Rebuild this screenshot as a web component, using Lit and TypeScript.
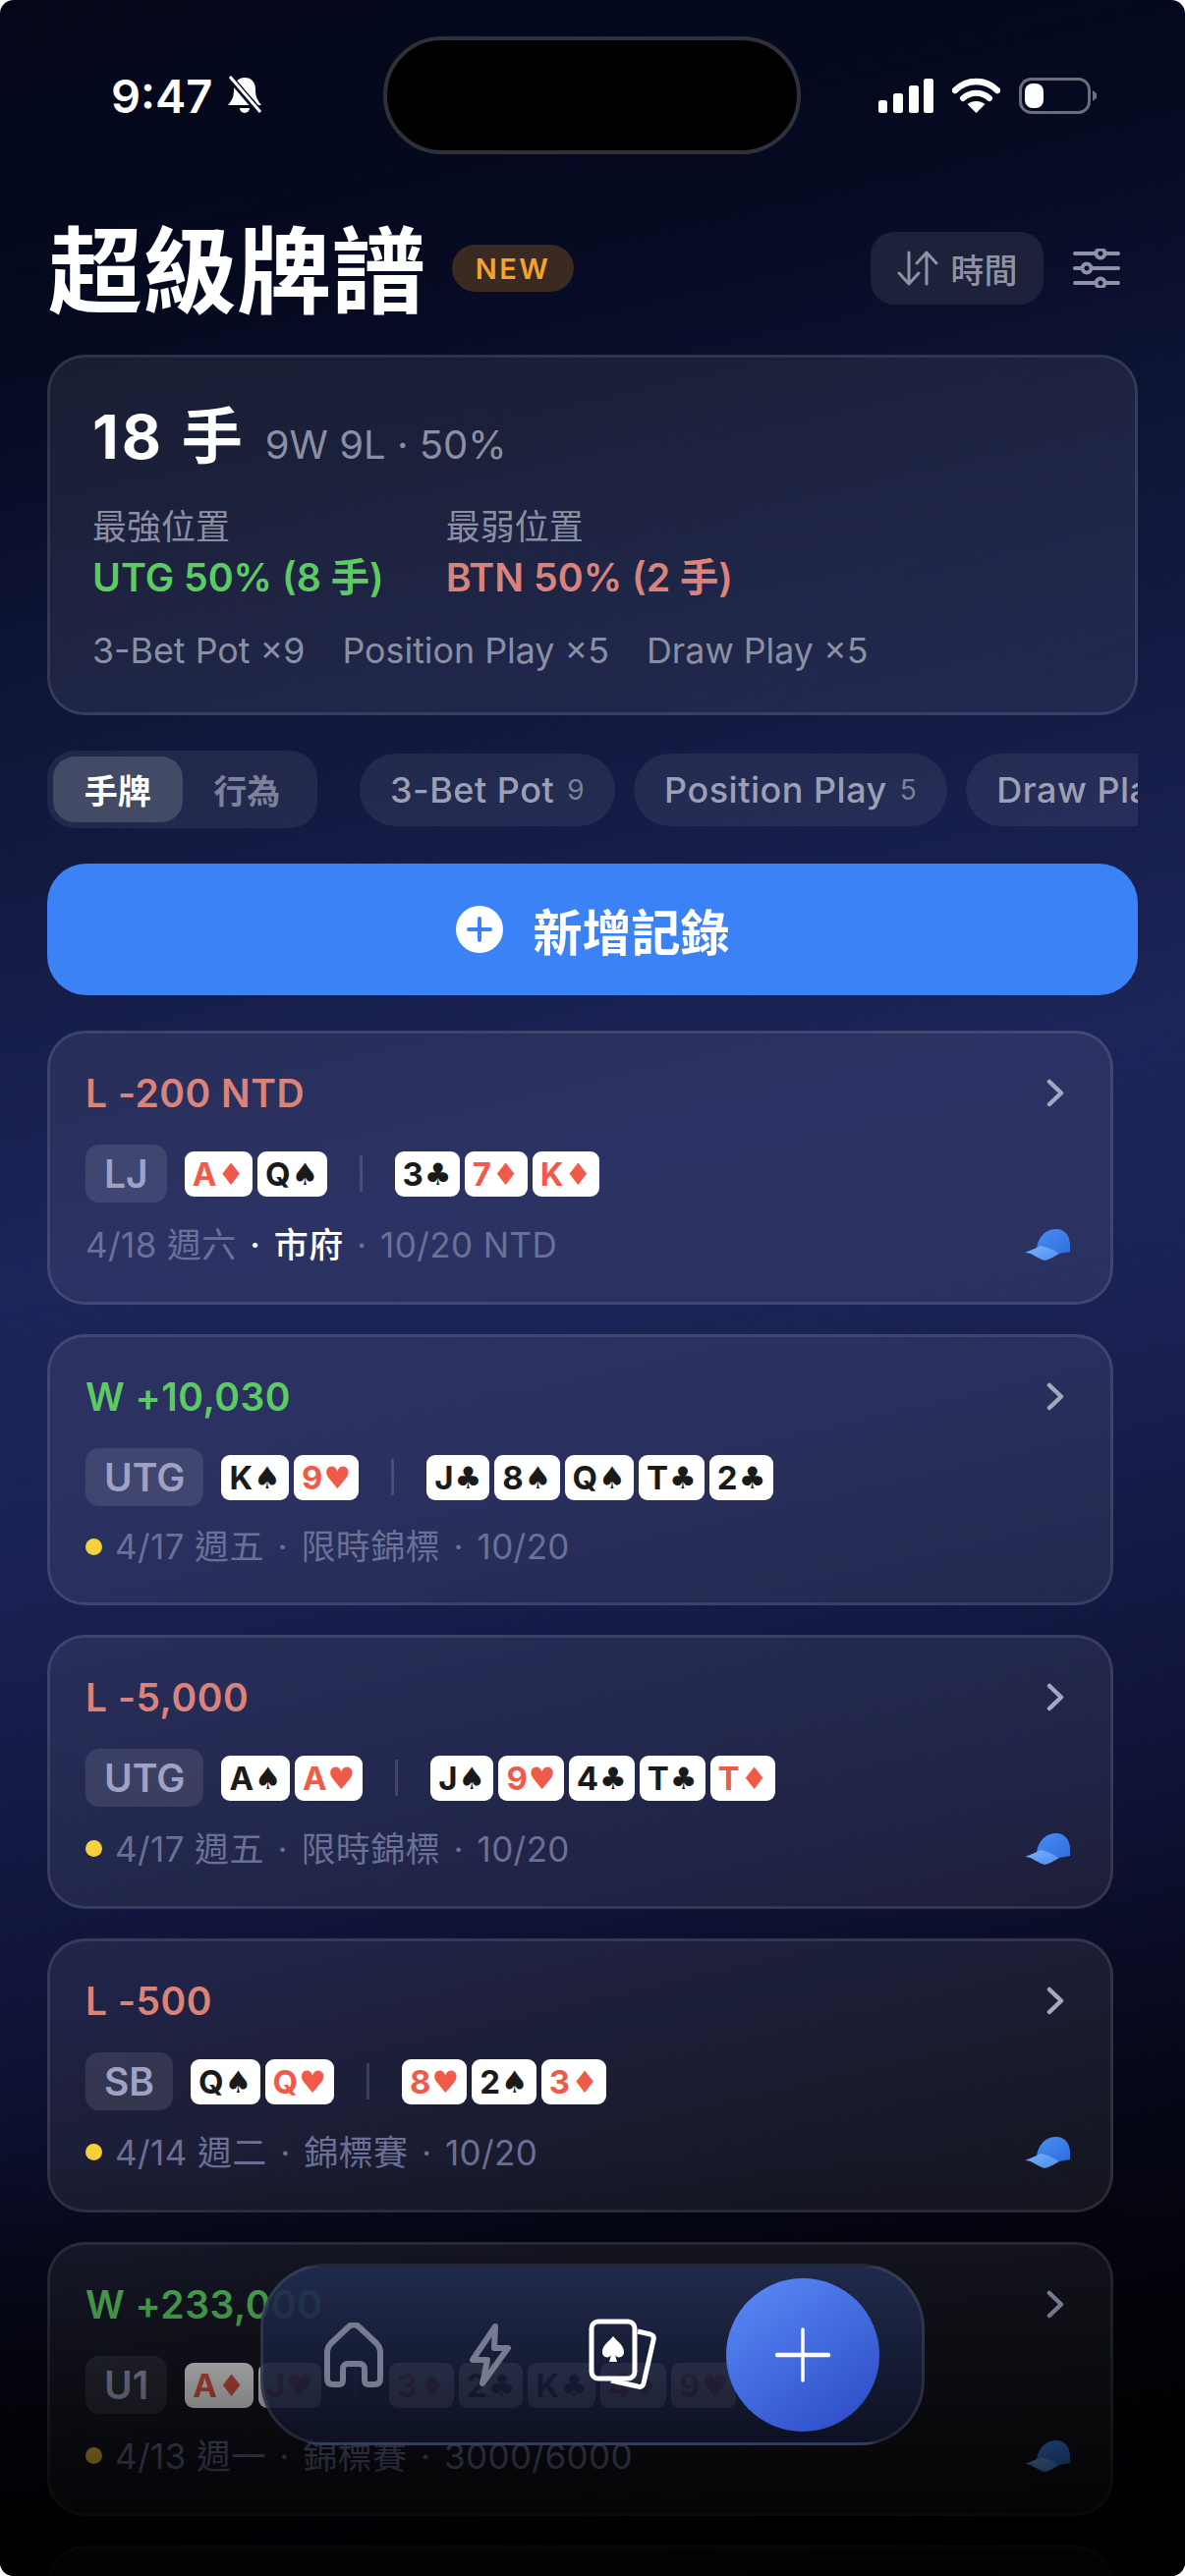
import { LitElement, html, css, svg } from 'lit';
import { customElement } from 'lit/decorators.js';

interface Hand {
  result: string;
  win: boolean;
  pos: string;
  hole: string[];
  board: string[];
  dot: boolean;
  date: string;
  venue: string;
  venueLit?: boolean;
  stakes: string;
  hat: boolean;
}

const HANDS: Hand[] = [
  { result: 'L -200 NTD', win: false, pos: 'LJ', hole: ['A♦', 'Q♠'], board: ['3♣', '7♦', 'K♦'], dot: false, date: '4/18 週六', venue: '市府', venueLit: true, stakes: '10/20 NTD', hat: true },
  { result: 'W +10,030', win: true, pos: 'UTG', hole: ['K♠', '9♥'], board: ['J♣', '8♠', 'Q♠', 'T♣', '2♣'], dot: true, date: '4/17 週五', venue: '限時錦標', stakes: '10/20', hat: false },
  { result: 'L -5,000', win: false, pos: 'UTG', hole: ['A♠', 'A♥'], board: ['J♠', '9♥', '4♣', 'T♣', 'T♦'], dot: true, date: '4/17 週五', venue: '限時錦標', stakes: '10/20', hat: true },
  { result: 'L -500', win: false, pos: 'SB', hole: ['Q♠', 'Q♥'], board: ['8♥', '2♠', '3♦'], dot: true, date: '4/14 週二', venue: '錦標賽', stakes: '10/20', hat: true },
  { result: 'W +233,000', win: true, pos: 'U1', hole: ['A♦', 'J♥'], board: ['3♦', '2♣', 'K♣', '4♦', '9♥'], dot: true, date: '4/13 週一', venue: '錦標賽', stakes: '3000/6000', hat: true },
];

const chevron = svg`<path d="M3 3l12 11.5L3 26" fill="none" stroke="#a3a7c0" stroke-width="4.5" stroke-linecap="round" stroke-linejoin="round"/>`;

@customElement('app-root')
export class AppRoot extends LitElement {
  static styles = css`
    :host {
      display: block;
      width: 1206px;
      height: 2622px;
      background: #fff;
      font-family: Inter, "Noto Sans CJK TC", sans-serif;
      color: #fff;
    }
    .screen {
      position: relative;
      height: 100%;
      overflow: hidden;
      border-radius: 14px;
      background: linear-gradient(167deg, #04071a 0%, #050a20 12%, #11183d 28%, #1c2459 45%, #1a2152 56%, #10143a 70%, #050614 84%, #000 100%);
    }
    .status {
      height: 218px;
      padding: 66px 89px 0 113px;
      box-sizing: border-box;
      display: flex;
      justify-content: space-between;
      align-items: flex-start;
    }
    .clock {
      display: flex;
      align-items: center;
      gap: 13px;
      height: 62px;
      font-size: 47px;
      font-weight: 600;
    }
    .sys {
      display: flex;
      align-items: center;
      gap: 19px;
      height: 62px;
    }
    .island {
      position: absolute;
      left: 390px;
      top: 37px;
      width: 425px;
      height: 120px;
      box-sizing: border-box;
      border: 4px solid #2f303a;
      border-radius: 60px;
      background: #000;
    }
    .page {
      padding: 0 48px;
    }
    .title-row {
      display: flex;
      align-items: center;
      height: 110px;
    }
    h1 {
      margin: 5px 0 0 1px;
      font-size: 96px;
      line-height: 110px;
      font-weight: 700;
    }
    .new {
      margin-left: 27px;
      width: 124px;
      height: 48px;
      border-radius: 24px;
      background: #3a2a22;
      color: #f5a32f;
      font-size: 29px;
      font-weight: 600;
      letter-spacing: 2.5px;
      display: flex;
      align-items: center;
      justify-content: center;
    }
    .sort {
      margin-left: auto;
      width: 176px;
      height: 74px;
      border-radius: 24px;
      background: #1d2139;
      color: #8f92a6;
      font-size: 34px;
      font-weight: 500;
      display: flex;
      align-items: center;
      justify-content: center;
      gap: 13px;
    }
    .filter {
      margin: 0 18px 0 30px;
    }
    .summary {
      margin-top: 33px;
      box-sizing: border-box;
      height: 367px;
      padding: 45px 44px 39px;
      border: 3px solid rgba(255, 255, 255, 0.1);
      border-radius: 38px;
      background: linear-gradient(160deg, rgba(255, 255, 255, 0.08), rgba(255, 255, 255, 0.06));
    }
    .head {
      display: flex;
      align-items: baseline;
      gap: 20px;
      line-height: 72px;
      margin-left: -1px;
    }
    .head b {
      font-size: 62px;
      font-weight: 700;
      letter-spacing: 3px;
    }
    .head span {
      font-size: 40px;
      color: #8b8fa3;
    }
    .extremes {
      display: flex;
      gap: 63px;
      margin-top: 25px;
      margin-left: -1px;
    }
    .label {
      font-size: 35px;
      line-height: 44px;
      color: #8b8fa3;
    }
    .value {
      margin-top: 5px;
      font-size: 39.300px;
      line-height: 50px;
      font-weight: 600;
    }
    .win {
      color: #5ccb62;
    }
    .loss {
      color: #d9837b;
    }
    .tags {
      display: flex;
      gap: 38px;
      margin: 25px 0 0 -1px;
      font-size: 35.800px;
      line-height: 48px;
      color: #8b8fa3;
    }
    .toolbar {
      margin-top: 36px;
      height: 79px;
      display: flex;
      align-items: center;
      overflow: hidden;
    }
    .segment {
      flex: none;
      box-sizing: border-box;
      width: 275px;
      height: 79px;
      padding: 6px;
      margin-right: 43px;
      border-radius: 28px;
      background: rgba(255, 255, 255, 0.07);
      display: flex;
      align-items: center;
      font-size: 34px;
      font-weight: 600;
      color: #7d8199;
    }
    .segment span {
      width: 132px;
      height: 67px;
      display: flex;
      align-items: center;
      justify-content: center;
    }
    .segment .on {
      border-radius: 22px;
      background: #434a66;
      color: #fff;
    }
    .chip {
      flex: none;
      height: 74px;
      padding: 0 31px;
      margin-right: 19px;
      border-radius: 37px;
      background: rgba(255, 255, 255, 0.07);
      color: #9ba0b5;
      font-size: 36px;
      font-weight: 500;
      letter-spacing: 0.5px;
      display: flex;
      align-items: center;
      gap: 13px;
    }
    .chip small {
      font-size: 28px;
      font-weight: 400;
      color: #7d8199;
    }
    .add {
      margin-top: 36px;
      height: 134px;
      border-radius: 40px;
      background: #3b82f6;
      display: flex;
      align-items: center;
      justify-content: center;
      gap: 31px;
      font-size: 50px;
      font-weight: 600;
    }
    .list {
      margin-top: 36px;
      display: flex;
      flex-direction: column;
      gap: 30px;
      width: 1085px;
    }
    .card {
      box-sizing: border-box;
      padding: 35px 41px 34px 36px;
      border: 3px solid rgba(255, 255, 255, 0.1);
      border-radius: 38px;
      background: rgba(255, 255, 255, 0.07);
    }
    .card.stub {
      height: 278px;
    }
    .top {
      display: flex;
      justify-content: space-between;
      align-items: center;
      height: 50px;
      font-size: 39px;
      font-weight: 600;
      letter-spacing: 0.5px;
    }
    .top svg {
      margin-right: 6px;
    }
    .cards {
      margin-top: 28px;
      display: flex;
      align-items: center;
      gap: 5px;
    }
    .pos {
      box-sizing: border-box;
      height: 59px;
      padding: 0 19px;
      margin-right: 13px;
      border-radius: 14px;
      background: rgba(255, 255, 255, 0.1);
      color: #9ea3c6;
      font-size: 39px;
      font-weight: 600;
      display: flex;
      align-items: center;
    }
    .pc {
      box-sizing: border-box;
      height: 46px;
      padding: 0 8px;
      border-radius: 9px;
      background: #fff;
      color: #1a1a1a;
      font-size: 33px;
      font-weight: 700;
      display: flex;
      align-items: center;
      gap: 1px;
    }
    .pc.red {
      color: #ef5a4a;
    }
    .pc i {
      font-family: "DejaVu Sans", sans-serif;
      font-style: normal;
      font-size: 31px;
      font-weight: 400;
    }
    .sep {
      width: 3px;
      height: 37px;
      margin: 0 28px;
      background: rgba(255, 255, 255, 0.14);
    }
    .meta {
      margin-top: 19px;
      min-height: 44px;
      padding-bottom: 1px;
      display: flex;
      align-items: center;
      font-size: 35px;
      line-height: 44px;
      color: #6a7096;
      letter-spacing: 0.4px;
    }
    .meta .dot {
      width: 17px;
      height: 17px;
      margin-right: 13px;
      border-radius: 50%;
      background: #f6d13c;
    }
    .meta .mid {
      margin: 0 13.500px;
    }
    .meta .lit {
      color: #fff;
      font-weight: 500;
    }
    .meta svg {
      margin: 8px 0 7px auto;
    }
    .fade {
      position: absolute;
      left: 0;
      right: 0;
      bottom: 0;
      height: 430px;
      background: linear-gradient(180deg, rgba(0, 0, 0, 0), rgba(0, 0, 0, 0.36) 47%, rgba(0, 0, 0, 0.92) 100%);
      pointer-events: none;
    }
    .nav {
      position: absolute;
      left: 265px;
      top: 2304px;
      width: 676px;
      height: 185px;
      box-sizing: border-box;
      border: 3px solid rgba(255, 255, 255, 0.09);
      border-radius: 66px;
      background: linear-gradient(180deg, rgba(34, 45, 80, 0.9), rgba(14, 18, 38, 0.88));
      display: flex;
      align-items: center;
      padding-left: 62px;
    }
    .nav .bolt {
      margin-left: 87px;
    }
    .nav .deck {
      margin-left: 78px;
    }
    .fab {
      position: absolute;
      left: 739px;
      top: 2319px;
      width: 156px;
      height: 156px;
      border-radius: 50%;
      background: linear-gradient(145deg, #5b8cf8, #2a48c4);
      display: flex;
      align-items: center;
      justify-content: center;
    }
  `;

  private hat() {
    return html`<svg width="46" height="32" viewBox="0 0 46 32">
      <defs>
        <linearGradient id="hc" x1="0" y1="0" x2="1" y2="1">
          <stop offset="0" stop-color="#4a8df0" />
          <stop offset="1" stop-color="#2f6fe0" />
        </linearGradient>
        <linearGradient id="hv" x1="0" y1="0" x2="1" y2="1">
          <stop offset="0" stop-color="#7ab2fa" />
          <stop offset="1" stop-color="#4c8ef0" />
        </linearGradient>
      </defs>
      <path d="M12 19C14 7 22 0 32 0c9 0 14 7 14 16v7l-11 2C28 22 20 20 12 19z" fill="url(#hc)" />
      <path d="M0 24c6-2 12-5 16-7 8 2 15 5 19 8-5 3-10 6-15 7C14 31 8 24 0 24z" fill="url(#hv)" />
    </svg>`;
  }

  private playing(c: string) {
    const red = c.endsWith('♦') || c.endsWith('♥');
    return html`<span class="pc ${red ? 'red' : ''}">${c[0]}<i>${c[1]}</i></span>`;
  }

  private card(h: Hand) {
    const lit = h.venueLit ? 'lit' : '';
    return html`<div class="card">
      <div class="top ${h.win ? 'win' : 'loss'}">
        <span>${h.result}</span>
        <svg width="18" height="29" viewBox="0 0 18 29">${chevron}</svg>
      </div>
      <div class="cards">
        <span class="pos">${h.pos}</span>
        ${h.hole.map((c) => this.playing(c))}
        <span class="sep"></span>
        ${h.board.map((c) => this.playing(c))}
      </div>
      <div class="meta">
        ${h.dot ? html`<span class="dot"></span>` : ''}
        <span>${h.date}</span><span class="mid ${lit}">·</span><span class=${lit}>${h.venue}</span><span class="mid">·</span><span>${h.stakes}</span>
        ${h.hat ? this.hat() : ''}
      </div>
    </div>`;
  }

  render() {
    return html`
      <div class="screen">
        <div class="status">
          <div class="clock">
            9:47
            <svg width="40" height="40" viewBox="0 0 40 40">
              <path d="M20 2c-7 0-11 5-11 12 0 8-2 11-6 16h34c-4-5-6-8-6-16 0-7-4-12-11-12z" fill="#fff" />
              <path d="M15 33a5 5 0 0 0 10 0z" fill="#fff" />
              <path d="M5 2l31 36" stroke="#050a20" stroke-width="7" />
              <path d="M5 1l31 36" stroke="#fff" stroke-width="3" />
            </svg>
          </div>
          <div class="sys">
            <svg width="56" height="35" viewBox="0 0 56 35" fill="#fff">
              <rect x="0" y="22" width="9" height="13" rx="2.5" />
              <rect x="15" y="15" width="10" height="20" rx="2.5" />
              <rect x="31" y="7" width="10" height="28" rx="2.5" />
              <rect x="46" y="0" width="10" height="35" rx="2.5" />
            </svg>
            <svg width="49" height="36" viewBox="0 0 49 36">
              <path d="M3 13C15 1 34 1 46 13" fill="none" stroke="#fff" stroke-width="6.5" stroke-linecap="round" />
              <path d="M11 21c8-7 19-7 27 0" fill="none" stroke="#fff" stroke-width="6" stroke-linecap="round" />
              <path d="M24.500 36l-9-9c5-4 13-4 18 0z" fill="#fff" />
            </svg>
            <svg width="80" height="37" viewBox="0 0 80 37">
              <rect x="1.500" y="1.500" width="70" height="34" rx="11" fill="none" stroke="#6b6d7b" stroke-width="3" />
              <rect x="6" y="6" width="19" height="25" rx="8" fill="#fff" />
              <path d="M75 13l4 3v5l-4 3z" fill="#6b6d7b" />
            </svg>
          </div>
        </div>
        <div class="island"></div>

        <div class="page">
          <div class="title-row">
            <h1>超級牌譜</h1>
            <span class="new">NEW</span>
            <div class="sort">
              <svg width="42" height="36" viewBox="0 0 42 36" fill="none" stroke="#8f92a6" stroke-width="3" stroke-linecap="round" stroke-linejoin="round">
                <path d="M12 2v32M2 23l10 11 10-11" />
                <path d="M30 34V2M20 13L30 2l10 11" />
              </svg>
              <span>時間</span>
            </div>
            <svg class="filter" width="48" height="40" viewBox="0 0 48 40" fill="none" stroke="#8f92a6" stroke-width="4" stroke-linecap="round">
              <path d="M2 5h21M33 5h13M2 20h7M19 20h27M2 35h21M33 35h13" />
              <circle cx="28" cy="5" r="4.500" />
              <circle cx="14" cy="20" r="4.500" />
              <circle cx="28" cy="35" r="4.500" />
            </svg>
          </div>

          <section class="summary">
            <div class="head"><b>18 手</b><span>9W 9L · 50%</span></div>
            <div class="extremes">
              <div>
                <div class="label">最強位置</div>
                <div class="value win">UTG 50% (8 手)</div>
              </div>
              <div>
                <div class="label">最弱位置</div>
                <div class="value loss">BTN 50% (2 手)</div>
              </div>
            </div>
            <div class="tags">
              <span>3-Bet Pot ×9</span>
              <span>Position Play ×5</span>
              <span>Draw Play ×5</span>
            </div>
          </section>

          <div class="toolbar">
            <div class="segment"><span class="on">手牌</span><span>行為</span></div>
            <div class="chip">3-Bet Pot <small>9</small></div>
            <div class="chip">Position Play <small>5</small></div>
            <div class="chip">Draw Play <small>5</small></div>
          </div>

          <div class="add">
            <svg width="48" height="48" viewBox="0 0 48 48">
              <circle cx="24" cy="24" r="24" fill="#fff" />
              <path d="M24 13v22M13 24h22" stroke="#3b82f6" stroke-width="4" stroke-linecap="round" />
            </svg>
            <span>新增記錄</span>
          </div>

          <div class="list">
            ${HANDS.map((h) => this.card(h))}
            <div class="card stub"></div>
          </div>
        </div>

        <div class="fade"></div>

        <nav class="nav">
          <svg width="60" height="66" viewBox="0 0 60 66" fill="none" stroke="#777b8f" stroke-width="6" stroke-linejoin="round">
            <path d="M3 30c0-4 1-6 4-9L24 5c4-4 8-4 12 0l17 16c3 3 4 5 4 9v27c0 4-2 6-6 6h-6c-3 0-4-2-4-5V47c0-3-2-5-5-5H24c-3 0-5 2-5 5v11c0 3-1 5-4 5H9c-4 0-6-2-6-6z" />
          </svg>
          <svg class="bolt" width="44" height="66" viewBox="0 0 44 66" fill="none" stroke="#777b8f" stroke-width="6" stroke-linejoin="round">
            <path d="M27 4L4 38h15l-5 24 26-36H26z" />
          </svg>
          <svg class="deck" width="72" height="74" viewBox="0 0 72 74" fill="none" stroke="#fff" stroke-width="5">
            <rect x="3" y="3" width="44" height="58" rx="7" />
            <path d="M50 13l13 3c3 1 4 3 3 6l-10 44c-1 3-3 4-6 3l-27-6" stroke-linejoin="round" />
            <path d="M25 18c4 5 11 9 11 16 0 6-7 7-9 3l2 7h-8l2-7c-2 4-9 3-9-3 0-7 7-11 11-16z" fill="#fff" stroke="none" />
          </svg>
        </nav>
        <div class="fab">
          <svg width="56" height="56" viewBox="0 0 56 56">
            <path d="M28 2v52" stroke="#fff" stroke-width="3.500" stroke-linecap="round" />
            <path d="M2 28h52" stroke="#fff" stroke-width="4.500" stroke-linecap="round" />
          </svg>
        </div>
      </div>
    `;
  }
}
